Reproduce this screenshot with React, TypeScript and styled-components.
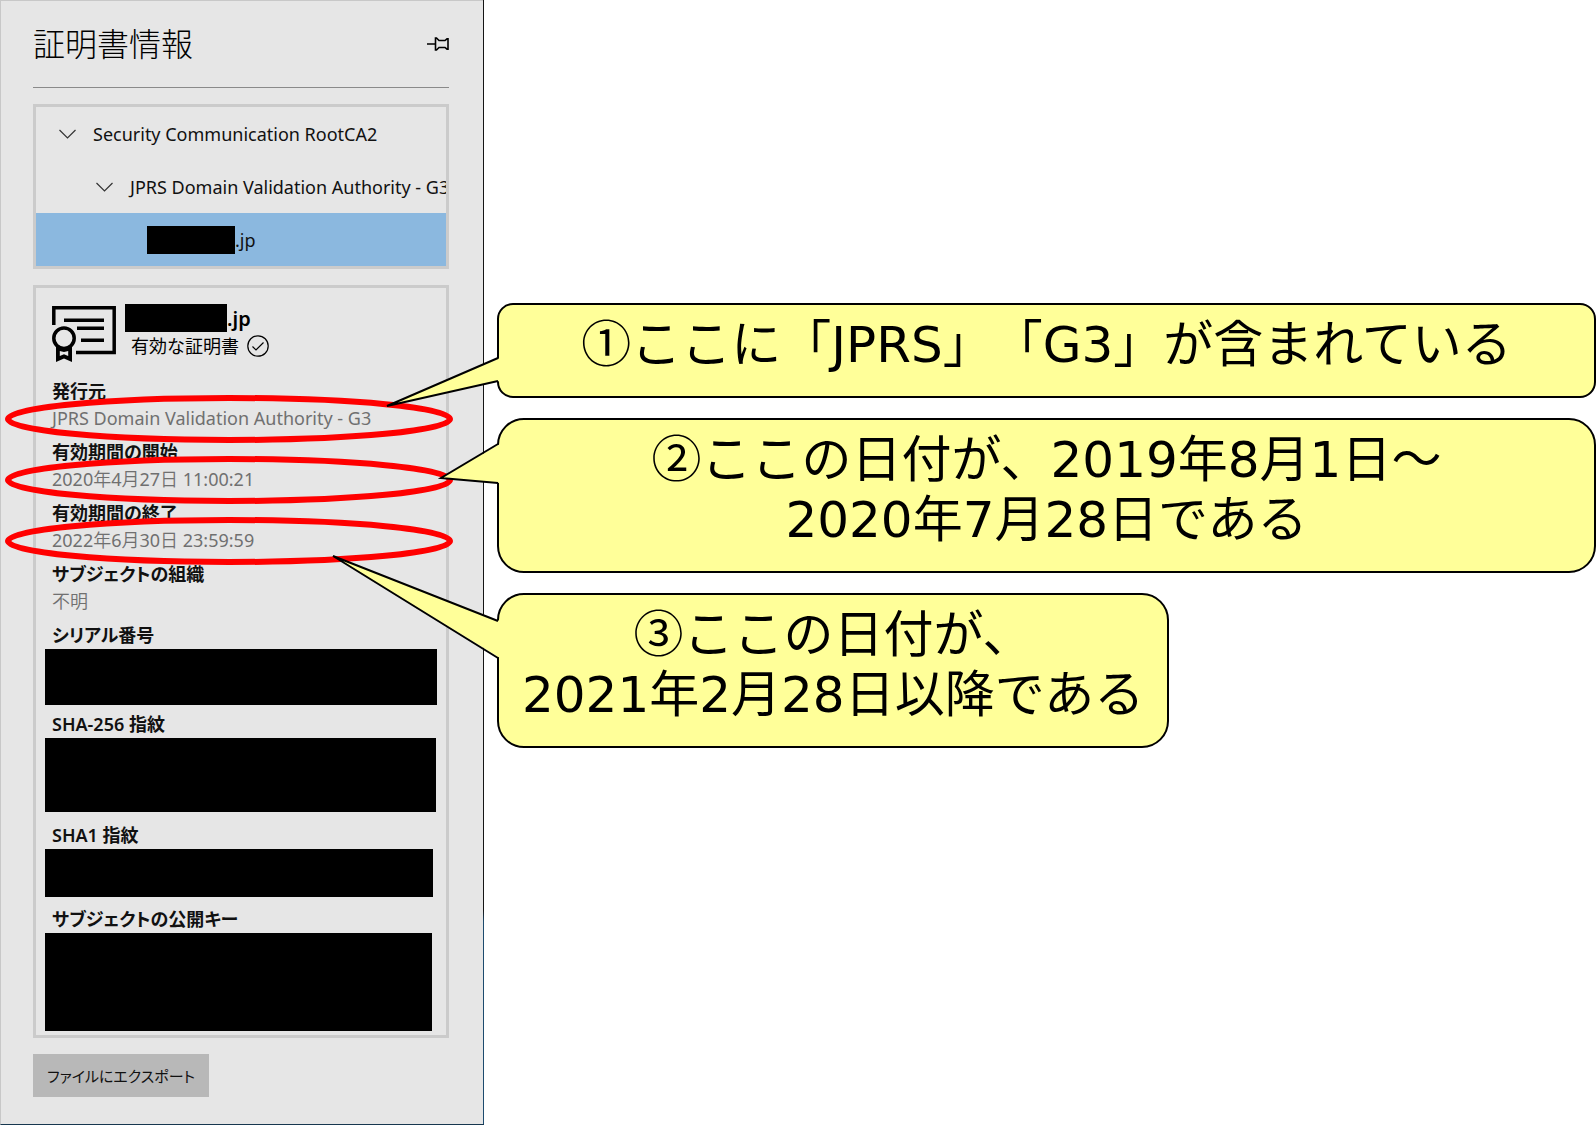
import React from "react";
import styled, { createGlobalStyle } from "styled-components";

const GlobalStyle = createGlobalStyle`
  *, *::before, *::after { box-sizing: border-box; }
  body {
    margin: 0;
    background: #fff;
    color: #000;
    font-family: "Noto Sans", "Noto Sans CJK JP", sans-serif;
  }
`;

const Page = styled.div`
  display: flex;
  align-items: stretch;
  min-height: 100vh;
`;

const Panel = styled.aside`
  position: relative;
  flex: 0 0 484px;
  min-width: 0;
  display: flex;
  flex-direction: column;
  padding: 0 35px 27px 32px;
  background: #e6e6e6;
  border: solid #c8c8c8;
  border-width: 1px 0 0 1px;
  border-bottom: 1px solid #17374f;

  &::after {
    content: "";
    position: absolute;
    top: -1px;
    right: 0;
    bottom: 0;
    width: 1px;
    background: linear-gradient(#151515 0 81%, #1d4b6e 82%);
  }
`;

const Header = styled.header`
  display: flex;
  align-items: center;
  justify-content: space-between;
  height: 87px;
  border-bottom: 1px solid #8a8a8a;
`;

const Title = styled.h1`
  margin: 0;
  font-size: 32px;
  line-height: 44px;
  font-weight: 300;
  color: #000;
`;

const IconButton = styled.button`
  display: flex;
  padding: 0;
  border: 0;
  background: none;
  color: #000;
`;

const Tree = styled.ul`
  margin: 16px 0 0;
  padding: 0;
  list-style: none;
  border: 3px solid #cbcbcb;
  overflow: hidden;
`;

const TreeRow = styled.li<{ $indent: number; $selected?: boolean }>`
  display: flex;
  align-items: center;
  height: 53px;
  padding-left: ${(p) => p.$indent}px;
  background: ${(p) => (p.$selected ? "#8bb8df" : "transparent")};
  font-size: 18px;
  line-height: 24px;
  white-space: nowrap;
  color: #111;
`;

const Chevron = styled.svg`
  flex: none;
  width: 17px;
  height: 10px;
  margin-right: 17px;
`;

const Redaction = styled.span<{ $w: number; $h: number }>`
  display: block;
  flex: none;
  width: ${(p) => p.$w}px;
  height: ${(p) => p.$h}px;
  background: #000;
`;

const Card = styled.section`
  flex: 1;
  margin-top: 16px;
  padding: 16px 0 0 16px;
  border: 3px solid #cbcbcb;
`;

const Subject = styled.div`
  display: flex;
  align-items: flex-start;
  height: 75px;
`;

const SubjectText = styled.div`
  margin-left: 8px;
`;

const SubjectName = styled.h2`
  display: flex;
  align-items: center;
  margin: 0;
  height: 28px;
  font-size: 20px;
  font-weight: 600;
`;

const Status = styled.p`
  display: flex;
  align-items: center;
  gap: 8px;
  margin: 0;
  padding-left: 6px;
  font-size: 18px;
  line-height: 28px;
`;

const Fields = styled.dl`
  margin: 0;
`;

const Field = styled.div<{ $after?: number }>`
  position: relative;
  margin-bottom: ${(p) => p.$after ?? 7}px;
`;

const Label = styled.dt`
  font-size: 18px;
  line-height: 24px;
  font-weight: 600;
  font-feature-settings: "palt";
  color: #111;
`;

const Value = styled.dd`
  margin: 0;
  font-family: "Noto Sans", "Noto Sans CJK JP DemiLight", "Noto Sans CJK JP", sans-serif;
  font-size: 18px;
  line-height: 30px;
  color: #707070;
`;

const HiddenValue = styled.dd`
  margin: 2px 0 0 -7px;
`;

const RingMark = styled.svg`
  position: absolute;
  left: -47px;
  top: 16px;
  pointer-events: none;
`;

const ExportButton = styled.button`
  align-self: flex-start;
  margin-top: 16px;
  padding: 0 14px;
  height: 43px;
  border: 0;
  background: #b8b8b8;
  color: #111;
  font-family: inherit;
  font-size: 15px;
  font-feature-settings: "palt";
`;

const Notes = styled.main`
  flex: 1;
  display: flex;
  flex-direction: column;
  align-items: flex-start;
  gap: 20px;
  padding: 303px 0 0 13px;
`;

const Callout = styled.p<{ $radius: number; $fill?: boolean }>`
  position: relative;
  margin: 0;
  padding: 10px 23px 21px;
  width: ${(p) => (p.$fill ? "100%" : "auto")};
  border: 2px solid #000;
  border-radius: ${(p) => p.$radius}px;
  background: #ffff99;
  font-family: "DejaVu Sans", "Noto Sans CJK JP", sans-serif;
  font-size: 50px;
  line-height: 60px;
  text-align: center;
  text-spacing-trim: space-all;
`;

const Numeral = styled.span`
  font-family: "Noto Sans CJK JP", sans-serif;
  line-height: 1px;
`;

const Tail = styled.svg<{ $w: number }>`
  position: absolute;
  left: ${(p) => -p.$w}px;
  top: 0;
  overflow: visible;
`;

type TailShape = { w: number; tip: number; from: number; to: number };

function CalloutTail({ w, tip, from, to }: TailShape) {
  return (
    <Tail $w={w} width={w + 2} height={Math.max(tip, to)} aria-hidden="true">
      <path d={`M${w + 1} ${from}L0 ${tip}L${w + 1} ${to}Z`} fill="#ffff99" />
      <path d={`M${w} ${from + 1}V${to - 1}`} stroke="#ffff99" strokeWidth="4" />
      <path d={`M${w - 1} ${from}L0 ${tip}L${w - 1} ${to}`} fill="none" stroke="#000" strokeWidth="2" />
    </Tail>
  );
}

function Ring() {
  return (
    <RingMark width="448" height="48" viewBox="0 0 448 48" aria-hidden="true">
      <ellipse cx="224" cy="24" rx="221" ry="21" fill="none" stroke="#f00" strokeWidth="6" />
    </RingMark>
  );
}

function ChevronDown() {
  return (
    <Chevron viewBox="0 0 17 10" fill="none" stroke="#333" strokeWidth="1.200" aria-hidden="true">
      <path d="M.5 1L8.500 9L16.500 1" />
    </Chevron>
  );
}

function CertificateIcon() {
  return (
    <svg width="65" height="60" viewBox="0 -2 65 60" fill="none" stroke="#000" strokeWidth="3.500" aria-hidden="true">
      <path d="M1.800 19V1.800H62.200V46.500H24" />
      <path d="M12 14.300H52M25 22.300H52M29 34.300H52" />
      <circle cx="12" cy="32.300" r="10.200" />
      <path
        d="M4 40V56L12 52.500L20 56V40L12 44ZM7.800 45V50L12 48.200L16.200 50V45L12 46Z"
        fill="#000"
        stroke="none"
        fillRule="evenodd"
      />
    </svg>
  );
}

const fields = [
  { label: "発行元", value: "JPRS Domain Validation Authority - G3", ring: true },
  { label: "有効期間の開始", value: "2020年4月27日 11:00:21", ring: true },
  { label: "有効期間の終了", value: "2022年6月30日 23:59:59", ring: true },
  { label: "サブジェクトの組織", value: "不明", ring: false },
];

const hiddenFields = [
  { label: "シリアル番号", w: 392, h: 56, after: 7 },
  { label: "SHA-256 指紋", w: 391, h: 74, after: 11 },
  { label: "SHA1 指紋", w: 388, h: 48, after: 10 },
  { label: "サブジェクトの公開キー", w: 387, h: 98, after: 0 },
];

export default function App() {
  return (
    <Page lang="ja">
      <GlobalStyle />
      <Panel>
        <Header>
          <Title>証明書情報</Title>
          <IconButton aria-label="ピン留め">
            <svg width="22" height="14" viewBox="0 0 22 14" fill="none" stroke="currentColor" strokeWidth="1.600">
              <path d="M0 7H8M8.500 1H9.500L12 3.500H18L20 1.800H21V12.200H20L18 10.500H12L9.500 13H8.500Z" />
            </svg>
          </IconButton>
        </Header>

        <Tree>
          <TreeRow $indent={23}>
            <ChevronDown />
            Security Communication RootCA2
          </TreeRow>
          <TreeRow $indent={60}>
            <ChevronDown />
            JPRS Domain Validation Authority - G3
          </TreeRow>
          <TreeRow $indent={111} $selected>
            <Redaction $w={88} $h={28} />
            .jp
          </TreeRow>
        </Tree>

        <Card>
          <Subject>
            <CertificateIcon />
            <SubjectText>
              <SubjectName>
                <Redaction $w={102} $h={28} />
                .jp
              </SubjectName>
              <Status>
                有効な証明書
                <svg width="22" height="22" viewBox="0 0 22 22" fill="none" stroke="#000" strokeWidth="1.200" aria-hidden="true">
                  <circle cx="11" cy="11" r="10.200" />
                  <path d="M5.500 11.500L9 15L16.500 7.500" />
                </svg>
              </Status>
            </SubjectText>
          </Subject>

          <Fields>
            {fields.map((f) => (
              <Field key={f.label}>
                <Label>{f.label}</Label>
                <Value>{f.value}</Value>
                {f.ring && <Ring />}
              </Field>
            ))}
            {hiddenFields.map((f) => (
              <Field key={f.label} $after={f.after}>
                <Label>{f.label}</Label>
                <HiddenValue>
                  <Redaction $w={f.w} $h={f.h} />
                </HiddenValue>
              </Field>
            ))}
          </Fields>
        </Card>

        <ExportButton>ファイルにエクスポート</ExportButton>
      </Panel>

      <Notes>
        <Callout $radius={16} $fill>
          <CalloutTail w={112} tip={101} from={53} to={76} />
          <Numeral>①</Numeral>ここに「JPRS」「G3」が含まれている
        </Callout>
        <Callout $radius={27} $fill>
          <CalloutTail w={58} tip={58} from={24} to={63} />
          <Numeral>②</Numeral>ここの日付が、2019年8月1日～
          <br />
          2020年7月28日である
        </Callout>
        <Callout $radius={27}>
          <CalloutTail w={166} tip={-39} from={26} to={63} />
          <Numeral>③</Numeral>ここの日付が、
          <br />
          2021年2月28日以降である
        </Callout>
      </Notes>
    </Page>
  );
}
